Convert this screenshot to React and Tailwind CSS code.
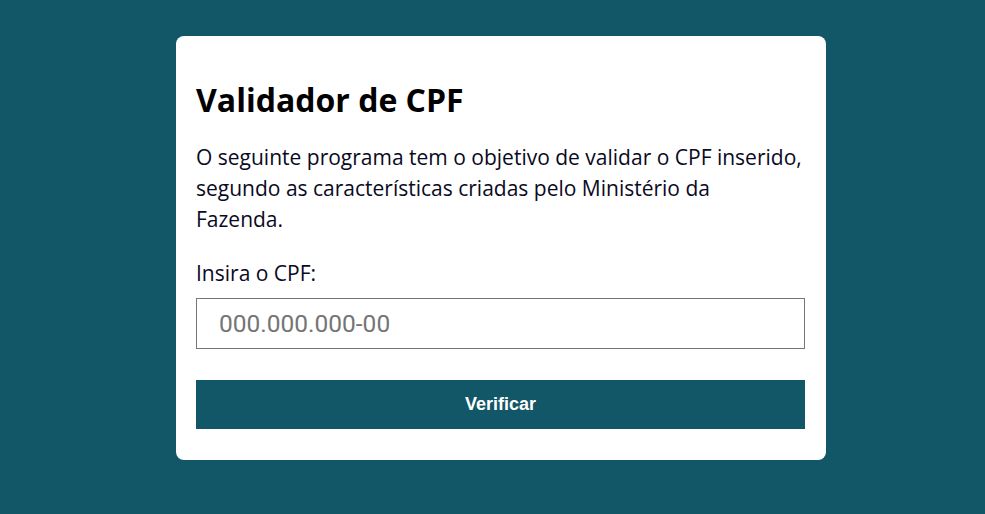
export default function App() {
  return (
    <div className="min-h-screen bg-[#125767] pt-[36px] font-['Open_Sans',sans-serif]">
      <div className="ml-[176px] w-[650px] rounded-lg bg-white pb-[31px] pl-5 pr-[21px] pt-[40px]">
        <h1 className="text-[32px] font-bold leading-[48px] text-black">Validador de CPF</h1>
        <p className="mt-[18px] text-[21px] leading-[31px] text-[#0a0a23]">
          O seguinte programa tem o objetivo de validar o CPF inserido, segundo as características criadas pelo Ministério da
          <br />
          Fazenda.
        </p>
        <label className="mt-[23px] block text-[21px] leading-[31px] text-[#0a0a23]">Insira o CPF:</label>
        <input
          type="text"
          placeholder="000.000.000-00"
          className="mt-[9px] block h-[51px] w-full border border-[#767676] px-[22px] font-['Roboto',sans-serif] text-[24.5px] text-black outline-none placeholder:text-[#757575]"
        />
        <button className="mt-[31px] block h-[49px] w-full bg-[#125767] font-['Liberation_Sans',Arial,sans-serif] text-[18px] font-bold text-white">
          Verificar
        </button>
      </div>
    </div>
  );
}
